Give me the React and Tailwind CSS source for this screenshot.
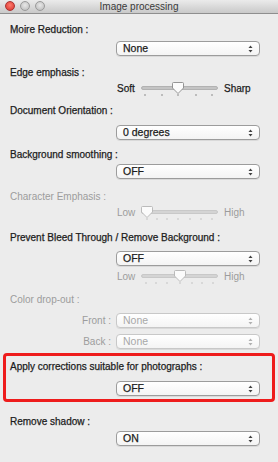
import React from "react";

const FONT = { fontFamily: '"Liberation Sans", Arial, sans-serif' };

function Arrows({ disabled }) {
  const c = disabled ? "#b0b0b0" : "#404040";
  return (
    <svg width="5" height="8" viewBox="0 0 5 8" className="absolute right-[6px] top-1/2 -translate-y-1/2">
      <path d="M2.5 0.5 L4.5 3 L0.5 3 Z" fill={c} />
      <path d="M2.5 7.5 L4.5 5 L0.5 5 Z" fill={c} />
    </svg>
  );
}

function Select({ value, disabled, className = "" }) {
  return (
    <div
      className={`relative h-[15px] w-[144px] rounded-[4px] border ${
        disabled ? "border-[#c8c8c8] text-[#a8a8a8]" : "border-[#9c9c9c] text-[#1c1c1c] [-webkit-text-stroke:0.25px_#1c1c1c]"
      } bg-gradient-to-b from-white to-[#f4f4f4] shadow-[0_1px_0_rgba(0,0,0,0.08)] pl-[6px] text-[10.5px] leading-[13px] ${className}`}
    >
      {value}
      <Arrows disabled={disabled} />
    </div>
  );
}

function Label({ children, disabled, className = "" }) {
  return (
    <div
      className={`h-[14px] text-[10px] leading-[14px] ${
        disabled ? "text-[#9c9c9c]" : "text-[#1c1c1c] [-webkit-text-stroke:0.25px_#1c1c1c]"
      } ${className}`}
    >
      {children}
    </div>
  );
}

function SliderSvg({ thumb, ticks, disabled }) {
  const track = disabled ? "#d4d4d4" : "#c4c4c4";
  const trackEdge = disabled ? "#c2c2c2" : "#a8a8a8";
  const tick = disabled ? "#c4c4c4" : "#8c8c8c";
  const tEdge = disabled ? "#b4b4b4" : "#8a8a8a";
  return (
    <svg width="78" height="16" viewBox="0 0 78 16" className="block">
      <rect x="0.5" y="4.5" width="76" height="3" rx="1.5" fill={track} stroke={trackEdge} strokeWidth="0.8" />
      {ticks.map((t) => (
        <rect key={t} x={t - 0.5} y="12" width="1" height="2" fill={tick} />
      ))}
      <path
        d={`M${thumb - 5.5} 1.5 Q${thumb - 5.5} 0.5 ${thumb - 4.5} 0.5 L${thumb + 4.5} 0.5 Q${thumb + 5.5} 0.5 ${thumb + 5.5} 1.5 L${thumb + 5.5} 6 L${thumb} 11.5 L${thumb - 5.5} 6 Z`}
        fill="#fbfbfb"
        stroke={tEdge}
        strokeWidth="0.9"
      />
    </svg>
  );
}

function Slider({ left, right, thumb, ticks, disabled, labelsDisabled, className = "" }) {
  const tc = labelsDisabled ? "text-[#9c9c9c]" : "text-[#1c1c1c] [-webkit-text-stroke:0.25px_#1c1c1c]";
  return (
    <div className={`flex h-[16px] items-start pl-[117px] ${className}`}>
      <div className={`w-[24px] text-[10px] leading-[14px] ${tc}`}>{left}</div>
      <SliderSvg thumb={thumb} ticks={ticks} disabled={disabled} />
      <div className={`ml-[5px] text-[10px] leading-[14px] ${tc}`}>{right}</div>
    </div>
  );
}

export default function App() {
  return (
    <div className="h-[462px] w-[278px] overflow-hidden bg-[#ececec]" style={FONT}>
      {/* Title bar */}
      <div className="relative flex h-[14px] items-center justify-center border-b border-[#8e8e8e] bg-gradient-to-b from-[#ebebeb] to-[#c9c9c9]">
        <div className="absolute left-[5px] top-[1px] flex gap-[5px]">
          <div className="h-[10px] w-[10px] rounded-full border border-[#a33] bg-[radial-gradient(circle_at_50%_40%,#ff7a6e,#d6332a)]" />
          <div className="h-[10px] w-[10px] rounded-full border border-[#9a9a9a] bg-[radial-gradient(circle_at_50%_40%,#e8e8e8,#b8b8b8)]" />
          <div className="h-[10px] w-[10px] rounded-full border border-[#9a9a9a] bg-[radial-gradient(circle_at_50%_40%,#e8e8e8,#b8b8b8)]" />
        </div>
        <div className="text-[10px] leading-[13px] text-[#3a3a3a]">Image processing</div>
      </div>

      <div className="flex flex-col">
        <Label className="mt-[9px] pl-[10px]">Moire Reduction :</Label>
        <Select value="None" className="ml-[116px] mt-[4px]" />

        <Label className="mt-[10px] pl-[10px]">Edge emphasis :</Label>
        <Slider className="mt-[2px]" left="Soft" right="Sharp" thumb={37} ticks={[4, 21, 37, 55, 71]} />

        <Label className="mt-[6px] pl-[10px]">Document Orientation :</Label>
        <Select value="0 degrees" className="ml-[116px] mt-[7px]" />

        <Label className="mt-[8px] pl-[10px]">Background smoothing :</Label>
        <Select value="OFF" className="ml-[116px] mt-[2px]" />

        <Label disabled className="mt-[11px] pl-[10px]">Character Emphasis :</Label>
        <Slider
          className="mt-[2px]"
          left="Low"
          right="High"
          thumb={6}
          ticks={[6, 16, 26, 37, 49, 60, 71]}
          disabled
          labelsDisabled
        />

        <Label className="mt-[9px] pl-[10px]">Prevent Bleed Through / Remove Background :</Label>
        <Select value="OFF" className="ml-[116px] mt-[6px]" />
        <Slider
          className="mt-[4px]"
          left="Low"
          right="High"
          thumb={39}
          ticks={[5, 15, 26, 39, 51, 61, 72]}
          disabled
          labelsDisabled
        />

        <Label disabled className="mt-[7px] pl-[10px]">Color drop-out :</Label>
        <div className="mt-[6px] flex items-center">
          <div className="w-[111px] text-right text-[10px] leading-[14px] text-[#9c9c9c]">Front :</div>
          <Select value="None" disabled className="ml-[5px]" />
        </div>
        <div className="mt-[6px] flex items-center">
          <div className="w-[111px] text-right text-[10px] leading-[14px] text-[#9c9c9c]">Back :</div>
          <Select value="None" disabled className="ml-[5px]" />
        </div>

        <div className="mx-[3px] mt-[4px] rounded-[4px] border-[3px] border-[#ee1c1c] pb-[3px] pt-[4px]">
          <Label className="pl-[4px]">Apply corrections suitable for photographs :</Label>
          <Select value="OFF" className="ml-[110px] mt-[7px]" />
        </div>

        <Label className="mt-[13px] pl-[10px]">Remove shadow :</Label>
        <Select value="ON" className="ml-[116px] mt-[2px]" />
      </div>
    </div>
  );
}
